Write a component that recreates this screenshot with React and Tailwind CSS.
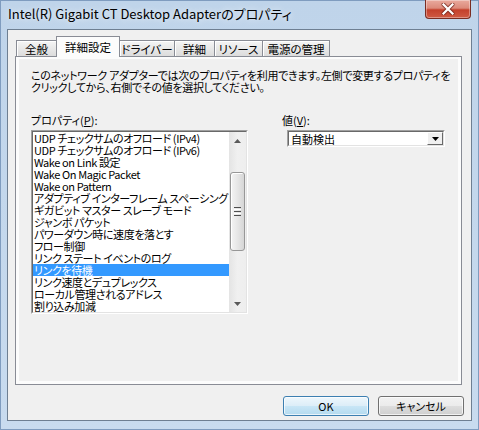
const items = [
  "UDP チェックサムのオフロード (IPv4)",
  "UDP チェックサムのオフロード (IPv6)",
  "Wake on Link 設定",
  "Wake On Magic Packet",
  "Wake on Pattern",
  "アダプティブ インターフレーム スペーシング",
  "ギガビット マスター スレーブ モード",
  "ジャンボ パケット",
  "パワーダウン時に速度を落とす",
  "フロー制御",
  "リンク ステート イベントのログ",
  "リンクを待機",
  "リンク速度とデュプレックス",
  "ローカル管理されるアドレス",
  "割り込み加減",
];

const tabs = [
  { label: "全般", w: "w-[41px]" },
  { label: "詳細設定", w: "w-[64px]", selected: true },
  { label: "ドライバー", w: "w-[56px]" },
  { label: "詳細", w: "w-[41px]" },
  { label: "リソース", w: "w-[49px]" },
  { label: "電源の管理", w: "w-[68px]" },
];

function Tab({ label, w, selected }) {
  if (selected) {
    return (
      <div
        className={`${w} h-[21px] -mb-px -ml-px border border-b-0 border-[#898c95] bg-[#fcfcfc] flex items-start justify-center pt-[3px] text-[11.5px] leading-[14px] relative z-10`}
      >
        {label}
      </div>
    );
  }
  return (
    <div
      className={`${w} h-[16px] -ml-px first:ml-0 border border-b-0 border-[#898c95] bg-gradient-to-b from-[#f5f5f5] to-[#dcdcdc] shadow-[inset_1px_1px_0_#ffffff] flex items-center justify-center text-[11.5px] leading-[14px]`}
    >
      {label}
    </div>
  );
}

function ArrowUp() {
  return (
    <svg width="7" height="4" viewBox="0 0 7 4">
      <polygon points="0,4 3.5,0 7,4" fill="#5a5a5a" />
    </svg>
  );
}
function ArrowDown({ color = "#5a5a5a" }) {
  return (
    <svg width="7" height="4" viewBox="0 0 7 4">
      <polygon points="0,0 7,0 3.5,4" fill={color} />
    </svg>
  );
}

export default function App() {
  return (
    <div className="w-[479px] h-[430px] overflow-hidden flex flex-col bg-gradient-to-b from-[#bfd4ea] to-[#c8dbef] shadow-[inset_0_0_0_1px_#7f9cbf] text-black font-['Noto_Sans_CJK_JP',sans-serif] [font-feature-settings:'palt']">
      {/* Title bar */}
      <div className="h-[29px] shrink-0 flex items-start">
        <div className="pl-[8px] pt-[6px] text-[13px] leading-[16px] whitespace-nowrap [text-shadow:0_0_6px_rgba(255,255,255,0.9)]">
          Intel(R) Gigabit CT Desktop Adapterのプロパティ
        </div>
        <div className="ml-auto mr-[8px] w-[46px] h-[19px] rounded-b-[4px] border border-t-0 border-[#7a2d22] bg-[linear-gradient(#e9aa9e_0%,#dc8a7a_45%,#c4402b_55%,#cf5a43_100%)] shadow-[inset_0_0_0_1px_rgba(255,255,255,0.35)] flex items-center justify-center">
          <svg width="14" height="12" viewBox="0 0 14 12">
            <path d="M2.5 1.5 L11.5 10.5 M11.5 1.5 L2.5 10.5" stroke="#6b2118" strokeWidth="4" strokeLinecap="round" opacity="0.7" />
            <path d="M2.5 1.5 L11.5 10.5 M11.5 1.5 L2.5 10.5" stroke="#ffffff" strokeWidth="2.2" strokeLinecap="square" />
          </svg>
        </div>
      </div>

      {/* Client area */}
      <div className="ml-[7px] w-[465px] h-[392px] shrink-0 border border-[#6e7f92] bg-[#f0f0f0] flex flex-col">
        <div className="ml-[7px] mt-[6px] w-[447px]">
          {/* Tabs */}
          <div className="flex items-end h-[20px] pl-[1px] relative z-10">
            {tabs.map((t) => (
              <Tab key={t.label} {...t} />
            ))}
          </div>
          {/* Panel */}
          <div className="h-[329px] border border-[#898c95] bg-[#fcfcfc] pt-[2px] px-[3px] pb-[3px]">
            <div className="h-full bg-[#f0f0f0] pl-[12px] pt-[10px]">
              <p className="text-[11px] leading-[12px] tracking-[-0.3px] whitespace-nowrap">
                このネットワーク アダプターでは次のプロパティを利用できます。左側で変更するプロパティを
                <br />
                クリックしてから、右側でその値を選択してください。
              </p>

              <div className="flex mt-[21px]">
                {/* Left column */}
                <div className="w-[217px]">
                  <div className="text-[11px] leading-[12px] h-[12px] mb-[4px]">
                    プロパティ(<span className="underline">P</span>):
                  </div>
                  <div className="h-[184px] border border-t-[#a0a0a0] border-l-[#a0a0a0] border-b-[#ffffff] border-r-[#ffffff]">
                    <div className="h-full border border-t-[#696969] border-l-[#696969] border-b-[#e3e3e3] border-r-[#e3e3e3] bg-white flex">
                      <div className="w-[196px] overflow-hidden">
                        {items.map((it, i) => (
                          <div
                            key={it}
                            className={`h-[12px] leading-[12px] text-[11px] tracking-[-0.4px] pl-[1px] whitespace-nowrap ${
                              i === 11 ? "bg-[#3399ff] text-white" : ""
                            }`}
                          >
                            {it}
                          </div>
                        ))}
                      </div>
                      {/* Scrollbar */}
                      <div className="w-[17px] flex flex-col bg-gradient-to-r from-[#e4e4e4] via-[#f0f0f0] to-[#eeeeee]">
                        <div className="h-[17px] flex items-center justify-center">
                          <ArrowUp />
                        </div>
                        <div className="h-[23px]" />
                        <div className="h-[79px] mx-[1px] rounded-[3px] border border-[#979797] bg-gradient-to-r from-[#f4f4f4] via-[#e6e6e6] to-[#d6d6d6] shadow-[inset_1px_1px_0_#ffffff] flex items-center justify-center">
                          <div className="flex flex-col gap-[1px]">
                            <div className="w-[7px] h-[1px] bg-[#4e4e4e]" />
                            <div className="w-[7px] h-[1px] bg-[#ffffff]" />
                            <div className="w-[7px] h-[1px] bg-[#4e4e4e]" />
                            <div className="w-[7px] h-[1px] bg-[#ffffff]" />
                            <div className="w-[7px] h-[1px] bg-[#4e4e4e]" />
                          </div>
                        </div>
                        <div className="flex-1" />
                        <div className="h-[17px] flex items-center justify-center">
                          <ArrowDown />
                        </div>
                      </div>
                    </div>
                  </div>
                </div>

                {/* Right column */}
                <div className="ml-[34px]">
                  <div className="text-[11px] leading-[12px] h-[12px] mb-[4px]">
                    値(<span className="underline">V</span>):
                  </div>
                  <div className="ml-[5px] w-[158px] h-[17px] border border-t-[#a0a0a0] border-l-[#a0a0a0] border-b-[#ffffff] border-r-[#ffffff]">
                    <div className="h-full border border-t-[#696969] border-l-[#696969] border-b-[#e3e3e3] border-r-[#e3e3e3] bg-white flex items-center">
                      <div className="flex-1 pl-[2px] text-[11px] leading-[12px]">自動検出</div>
                      <div className="w-[16px] h-full border border-t-[#ffffff] border-l-[#ffffff] border-b-[#696969] border-r-[#696969] bg-[#f0f0f0] flex items-center justify-center">
                        <ArrowDown color="#000000" />
                      </div>
                    </div>
                  </div>
                </div>
              </div>
            </div>
          </div>
        </div>

        {/* Buttons */}
        <div className="flex justify-end gap-[9px] mr-[7px] mt-[11px]">
          <div className="w-[86px] h-[20px] rounded-[3px] border border-[#3c7fb1] bg-[linear-gradient(#eef7fc_0%,#dcedf8_50%,#c9e6f6_50%,#b3daef_100%)] shadow-[inset_0_0_0_1px_rgba(255,255,255,0.7)] flex items-center justify-center text-[11px] leading-[12px]">
            OK
          </div>
          <div className="w-[86px] h-[20px] rounded-[3px] border border-[#707070] bg-[linear-gradient(#f2f2f2_0%,#ebebeb_50%,#dddddd_50%,#cfcfcf_100%)] shadow-[inset_0_0_0_1px_rgba(255,255,255,0.7)] flex items-center justify-center text-[11px] leading-[12px]">
            キャンセル
          </div>
        </div>
      </div>
    </div>
  );
}
